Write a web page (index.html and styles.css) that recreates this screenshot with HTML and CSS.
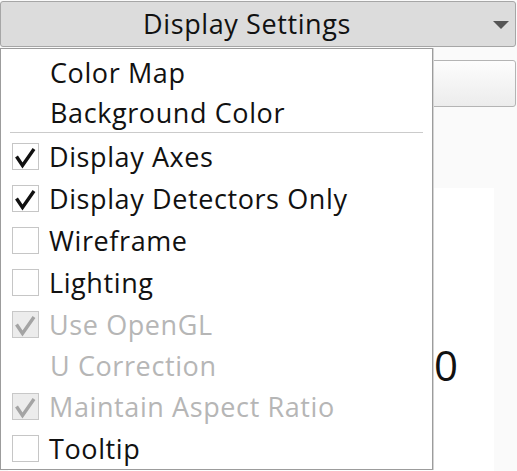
FILE: index.html
```html
<!DOCTYPE html>
<html>
<head>
<meta charset="utf-8">
<link rel="stylesheet" href="styles.css">
</head>
<body>
<div class="app">
  <div class="combo">
    <span class="combo-label">Display Settings</span>
    <svg class="combo-arrow" width="16" height="8" viewBox="0 0 16 8"><polygon points="0,0 16,0 8,8" fill="#555"/></svg>
  </div>
  <div class="content">
    <div class="btn"></div>
    <div class="plot"><span class="tick">0</span></div>
  </div>
  <div class="menu">
    <div class="item plain"><span class="label">Color Map</span></div>
    <div class="item plain"><span class="label">Background Color</span></div>
    <div class="sep"></div>
    <div class="item"><span class="box"><svg class="check" viewBox="0 0 25 25"><path d="M3.5 12.5 L9.5 21.5 L21 5"/></svg></span><span class="label">Display Axes</span></div>
    <div class="item"><span class="box"><svg class="check" viewBox="0 0 25 25"><path d="M3.5 12.5 L9.5 21.5 L21 5"/></svg></span><span class="label">Display Detectors Only</span></div>
    <div class="item"><span class="box"></span><span class="label">Wireframe</span></div>
    <div class="item"><span class="box"></span><span class="label">Lighting</span></div>
    <div class="item disabled"><span class="box"><svg class="check" viewBox="0 0 25 25"><path d="M3.5 12.5 L9.5 21.5 L21 5"/></svg></span><span class="label">Use OpenGL</span></div>
    <div class="item disabled plain"><span class="label">U Correction</span></div>
    <div class="item disabled"><span class="box"><svg class="check" viewBox="0 0 25 25"><path d="M3.5 12.5 L9.5 21.5 L21 5"/></svg></span><span class="label">Maintain Aspect Ratio</span></div>
    <div class="item"><span class="box"></span><span class="label">Tooltip</span></div>
  </div>
</div>
</body>
</html>
```

FILE: styles.css
```css
html, body {
  margin: 0;
  padding: 0;
  background: #fafafa;
}
body {
  font-family: "Open Sans", "DejaVu Sans", sans-serif;
  color: #111;
  width: 517px;
  height: 471px;
  overflow: hidden;
}
.app {
  position: relative;
  display: flex;
  flex-direction: column;
  height: 471px;
  padding-top: 1px;
  box-sizing: border-box;
}
.combo {
  height: 46px;
  margin-right: 1px;
  box-sizing: border-box;
  border: 1px solid #a6a6a6;
  border-radius: 3px;
  background: #dcdcdc;
  display: flex;
  align-items: center;
  padding-right: 6px;
}
.combo-label {
  flex: 1;
  text-align: center;
  font-size: 27px;
  letter-spacing: 0.6px;
  line-height: 44px;
  color: #111;
}
.combo-arrow {
  display: block;
  margin-top: 2px;
}
.content {
  flex: 1;
  display: flex;
  flex-direction: column;
  padding: 13px 1px 0 8px;
}
.btn {
  height: 47px;
  box-sizing: border-box;
  border: 1px solid #b4b4b4;
  border-radius: 3px;
  background: linear-gradient(#fdfdfd, #ececec);
}
.plot {
  flex: 1;
  margin-top: 81px;
  margin-right: 22px;
  background: #fff;
  position: relative;
}
.tick {
  position: absolute;
  left: 426px;
  top: 156px;
  font-size: 42px;
  line-height: 42px;
  color: #111;
}
.menu {
  position: absolute;
  left: 0;
  top: 48px;
  width: 433px;
  height: 422px;
  box-sizing: border-box;
  background: #fff;
  border: 1px solid #9c9c9c;
  box-shadow: 1px 0 0 #d4d4d4;
  padding-top: 3px;
  overflow: hidden;
}
.item {
  height: 42px;
  display: flex;
  align-items: center;
  font-size: 27px;
  letter-spacing: 0.6px;
  color: #111;
}
.item.plain {
  height: 40px;
}
.label {
  margin-left: 49px;
  white-space: nowrap;
}
.box + .label {
  margin-left: 10px;
}
.box {
  width: 27px;
  height: 27px;
  box-sizing: border-box;
  margin-left: 11px;
  border: 1px solid #c6c6c6;
  background: #fff;
  flex: none;
}
.check {
  display: block;
  width: 25px;
  height: 25px;
  fill: none;
  stroke: #111;
  stroke-width: 3.4;
  stroke-linecap: butt;
  stroke-linejoin: miter;
}
.disabled {
  color: #b6b6b6;
}
.disabled .box {
  background: #ececec;
  border-color: #c8c8c8;
}
.disabled .check {
  stroke: #a4a4a4;
}
.sep {
  height: 1px;
  background: #cbcbcb;
  margin: 0 9px 2px 9px;
}
```
